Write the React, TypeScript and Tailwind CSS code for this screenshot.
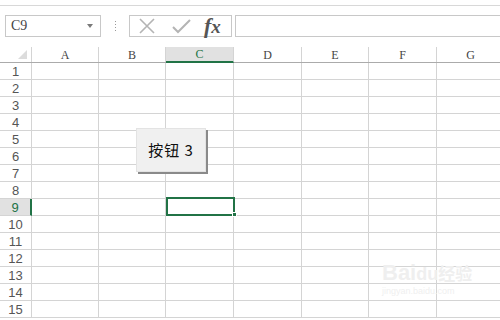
import React from "react";

const cols = [
  { name: "A", w: 67 },
  { name: "B", w: 67 },
  { name: "C", w: 68 },
  { name: "D", w: 68 },
  { name: "E", w: 67 },
  { name: "F", w: 68 },
  { name: "G", w: 68 },
];
const rows = Array.from({ length: 15 }, (_, i) => i + 1);

export default function App() {
  return (
    <div
      className="relative w-[500px] h-[320px] overflow-hidden bg-white"
      style={{ fontFamily: '"Liberation Sans", "Noto Sans CJK SC", sans-serif' }}
    >
      {/* top strip */}
      <div className="h-[6px] border-b border-[#d8d8d8] bg-white" />
      {/* formula bar */}
      <div className="flex items-start h-[41px] pt-[9px] pl-[5px]">
        <div className="relative flex items-center w-[96px] h-[22px] shrink-0 border border-[#c8c8c8] bg-white">
          <span
            className="pl-[5px] text-[14px] text-[#444] leading-none"
            style={{ fontFamily: '"Liberation Serif", serif' }}
          >
            C9
          </span>
          <div className="absolute right-[7px] top-[8px] w-0 h-0 border-l-[3px] border-r-[3px] border-t-[4px] border-l-transparent border-r-transparent border-t-[#7a7a7a]" />
        </div>
        <div className="flex flex-col justify-center gap-[2px] w-[28px] h-[22px] shrink-0 items-center">
          <div className="w-[1px] h-[1px] bg-[#999]" />
          <div className="w-[1px] h-[1px] bg-[#999]" />
          <div className="w-[1px] h-[1px] bg-[#999]" />
          <div className="w-[1px] h-[1px] bg-[#999]" />
        </div>
        <div className="flex items-center w-[103px] h-[22px] shrink-0 border border-[#c8c8c8] bg-white">
          <svg width="18" height="16" viewBox="0 0 18 16" className="ml-[8px]">
            <path d="M2 1 L16 15 M16 1 L2 15" stroke="#b4b4b4" strokeWidth="1.6" fill="none" />
          </svg>
          <svg width="19" height="15" viewBox="0 0 19 15" className="ml-[16px]">
            <path d="M1 8 L6 13 L18 1" stroke="#b4b4b4" strokeWidth="2" fill="none" />
          </svg>
          <span
            className="ml-[13px] text-[19px] italic text-[#555] leading-none font-bold"
            style={{ fontFamily: '"Liberation Serif", serif' }}
          >
            <span className="text-[22px]">f</span>x
          </span>
        </div>
        <div className="ml-[3px] flex-1 h-[22px] border border-[#c8c8c8] border-r-0 bg-white" />
      </div>

      {/* column headers */}
      <div className="flex h-[16px] border-b border-[#ababab]">
        <div className="relative w-[32px] shrink-0 border-r border-[#d4d4d4]">
          <div
            className="absolute right-[4px] bottom-[3px] w-0 h-0"
            style={{ borderBottom: "9px solid #dcdcdc", borderLeft: "9px solid transparent" }}
          />
        </div>
        {cols.map((c) => (
          <div
            key={c.name}
            className={`flex items-center justify-center shrink-0 border-r border-[#d4d4d4] text-[12px] leading-none ${
              c.name === "C" ? "bg-[#e1e1e1] text-[#217346] border-b-2 border-b-[#217346] -mb-[1px]" : "text-[#444]"
            }`}
            style={{ width: c.w, fontFamily: '"Liberation Serif", serif' }}
          >
            {c.name}
          </div>
        ))}
      </div>

      {/* rows */}
      {rows.map((r) => (
        <div key={r} className="flex h-[17px]">
          <div
            className={`flex items-center justify-center w-[32px] shrink-0 border-b border-[#d4d4d4] text-[13px] leading-none ${
              r === 9 ? "bg-[#e1e1e1] text-[#217346] border-r-2 border-r-[#217346]" : "text-[#555] border-r border-[#ababab]"
            }`}
            style={{ fontFamily: '"Liberation Sans", sans-serif' }}
          >
            {r}
          </div>
          {cols.map((c) => (
            <div
              key={c.name}
              className="shrink-0 border-r border-b border-[#d4d4d4]"
              style={{ width: c.w }}
            />
          ))}
        </div>
      ))}

      {/* selection C9 */}
      <div className="absolute left-[166px] top-[197px] w-[69px] h-[19px] border-2 border-[#217346]" />
      <div className="absolute left-[232px] top-[212px] w-[5px] h-[5px] bg-[#217346] border border-white" />

      {/* form button */}
      <div
        className="absolute left-[136px] top-[128px] w-[70px] h-[44px] flex items-center justify-center bg-[#f0f0f0] border border-[#e3e3e3] shadow-[2px_2px_0_#8a8a8a] text-[15px] text-[#111] tracking-[1px]"
        style={{ fontFamily: '"Noto Sans CJK SC", "Liberation Sans", sans-serif' }}
      >
        按钮 3
      </div>

      {/* watermark */}
      <div className="absolute left-[382px] top-[262px] text-[#efefef] leading-none pointer-events-none">
        <div className="text-[22px] font-bold" style={{ fontFamily: '"Liberation Sans", "Noto Sans CJK SC", sans-serif' }}>
          Bai<span className="text-[18px]">du</span><span className="text-[17px]">经验</span>
        </div>
        <div className="text-[9px] mt-[3px]">jingyan.baidu.com</div>
      </div>
    </div>
  );
}
